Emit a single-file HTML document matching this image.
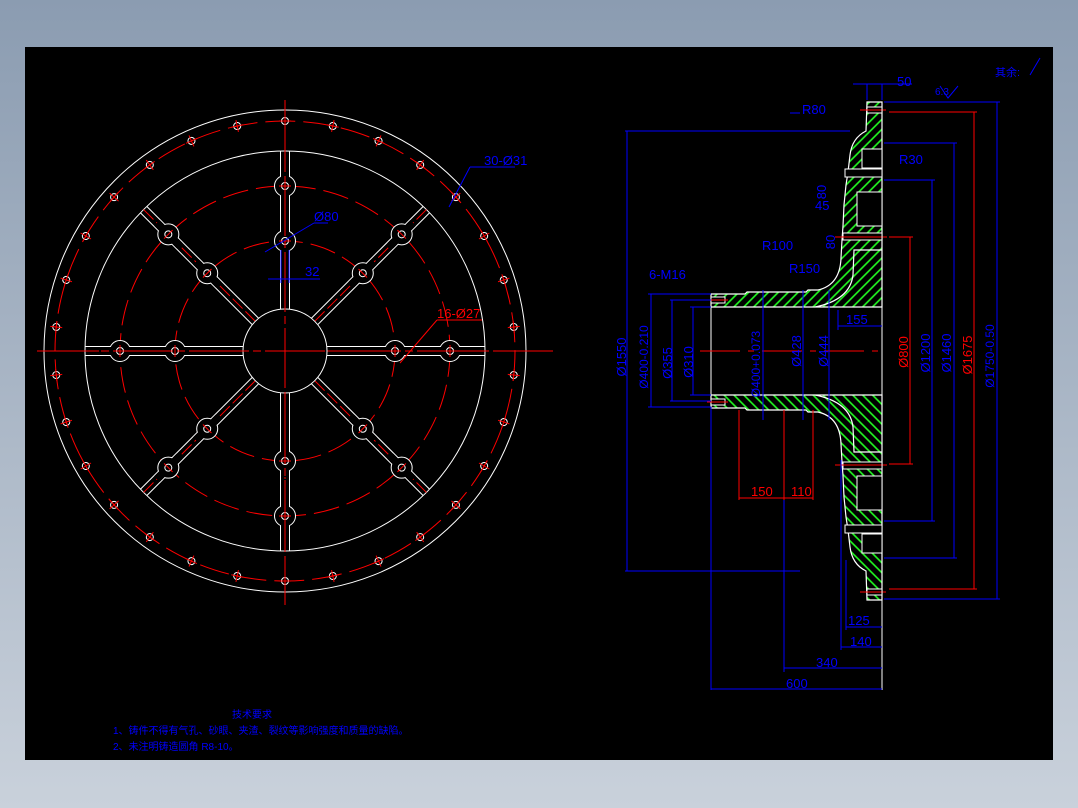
<!DOCTYPE html>
<html><head><meta charset="utf-8">
<style>
html,body{margin:0;padding:0;width:1078px;height:808px;overflow:hidden;background:linear-gradient(#8b9cb1,#c9d1db);}
svg{position:absolute;left:0;top:0}
text{font-family:"Liberation Sans","Noto Sans CJK SC",sans-serif;}
</style></head><body>
<svg width="1078" height="808" viewBox="0 0 1078 808" xmlns="http://www.w3.org/2000/svg">
<defs>
<pattern id="h" width="7" height="7" patternUnits="userSpaceOnUse" patternTransform="rotate(45)">
<line x1="1" y1="0" x2="1" y2="7" stroke="#2f2" stroke-width="1.6"/>
</pattern>
<g id="bh"><circle cx="285" cy="121" r="3.5" fill="none" stroke="#fff" stroke-width="1"/><path d="M279,121h12M285,115v12" stroke="#f00" stroke-width="1"/></g>
<g id="sp">
<path d="M280.5,151V309M289.5,151V309" stroke="#fff" fill="none" stroke-width="1"/>
<line x1="285" y1="151" x2="285" y2="309" stroke="#f00" stroke-dasharray="14,4" stroke-width="1"/>
<circle cx="285" cy="186" r="10.5" fill="#000" stroke="#fff"/>
<circle cx="285" cy="241" r="10.5" fill="#000" stroke="#fff"/>
<rect x="281" y="170" width="8" height="32" fill="#000"/>
<rect x="281" y="225" width="8" height="32" fill="#000"/>
<circle cx="285" cy="186" r="3.5" fill="none" stroke="#fff"/>
<circle cx="285" cy="241" r="3.5" fill="none" stroke="#fff"/>
<path d="M279,186h12M279,241h12" stroke="#f00"/>
</g>
<g id="half">
<path d="M711,294 L745,294 L747,292 L806,292 L808,290 L818,290 Q840,285 841,258 L842,240 L843,226 L844,205 L846,185 L848,172 L850,155 Q852,138 866,131 L867,102 L882,102 L882,307 L815,307 Q850,300 853,275 L854,250 L882,250 L882,307 L711,307 Z" fill="url(#h)" stroke="#fff" stroke-width="1.2"/>
<rect x="862" y="149" width="20" height="19" fill="#000" stroke="#fff"/>
<rect x="857" y="192" width="25" height="34" fill="#000" stroke="#fff"/>
<rect x="867" y="107" width="15" height="6" fill="#000" stroke="#fff"/>
<rect x="845" y="169" width="37" height="8" fill="#000" stroke="#fff"/>
<rect x="843" y="233" width="39" height="7" fill="#000" stroke="#fff"/>
<rect x="711" y="297" width="14" height="6" fill="#000" stroke="#fff"/>
<line x1="707" y1="300" x2="728" y2="300" stroke="#f00"/>
<line x1="860" y1="110" x2="886" y2="110" stroke="#f00"/>
<line x1="835" y1="237" x2="887" y2="237" stroke="#f00"/>
</g>
</defs>
<rect x="25" y="47" width="1028" height="713" fill="#000"/>

<g fill="none" stroke-width="1">
<circle cx="285" cy="351" r="241" stroke="#fff"/>
<circle cx="285" cy="351" r="230" stroke="#f00" stroke-dasharray="30,8"/>
<circle cx="285" cy="351" r="200" stroke="#fff"/>
<circle cx="285" cy="351" r="165" stroke="#f00" stroke-dasharray="26,8"/>
<circle cx="285" cy="351" r="110" stroke="#f00" stroke-dasharray="26,8"/>
</g>
<g>
<use href="#bh"/><use href="#bh" transform="rotate(12 285 351)"/><use href="#bh" transform="rotate(24 285 351)"/><use href="#bh" transform="rotate(36 285 351)"/><use href="#bh" transform="rotate(48 285 351)"/><use href="#bh" transform="rotate(60 285 351)"/><use href="#bh" transform="rotate(72 285 351)"/><use href="#bh" transform="rotate(84 285 351)"/><use href="#bh" transform="rotate(96 285 351)"/><use href="#bh" transform="rotate(108 285 351)"/><use href="#bh" transform="rotate(120 285 351)"/><use href="#bh" transform="rotate(132 285 351)"/><use href="#bh" transform="rotate(144 285 351)"/><use href="#bh" transform="rotate(156 285 351)"/><use href="#bh" transform="rotate(168 285 351)"/><use href="#bh" transform="rotate(180 285 351)"/><use href="#bh" transform="rotate(192 285 351)"/><use href="#bh" transform="rotate(204 285 351)"/><use href="#bh" transform="rotate(216 285 351)"/><use href="#bh" transform="rotate(228 285 351)"/><use href="#bh" transform="rotate(240 285 351)"/><use href="#bh" transform="rotate(252 285 351)"/><use href="#bh" transform="rotate(264 285 351)"/><use href="#bh" transform="rotate(276 285 351)"/><use href="#bh" transform="rotate(288 285 351)"/><use href="#bh" transform="rotate(300 285 351)"/><use href="#bh" transform="rotate(312 285 351)"/><use href="#bh" transform="rotate(324 285 351)"/><use href="#bh" transform="rotate(336 285 351)"/><use href="#bh" transform="rotate(348 285 351)"/>
</g>
<g>
<use href="#sp"/><use href="#sp" transform="rotate(45 285 351)"/><use href="#sp" transform="rotate(90 285 351)"/><use href="#sp" transform="rotate(135 285 351)"/><use href="#sp" transform="rotate(180 285 351)"/><use href="#sp" transform="rotate(225 285 351)"/><use href="#sp" transform="rotate(270 285 351)"/><use href="#sp" transform="rotate(315 285 351)"/>
</g>
<circle cx="285" cy="351" r="42" fill="#000" stroke="#fff"/>
<path d="M37,351H555M285,100V605" stroke="#f00" stroke-width="1" stroke-dasharray="60,4,8,4"/>
<g stroke="#00f" stroke-width="1" fill="none">
<path d="M470,167H515M470,167L449,207"/>
<path d="M314,223H328M314,223L265,252"/>
<path d="M281,250V283M289,250V283M268,279H320"/>
</g>
<path d="M437,320H482M437,320L400,363" stroke="#f00" fill="none"/>
<g fill="#00f" font-size="13">
<text x="484" y="165">30-Ø31</text>
<text x="314" y="221">Ø80</text>
<text x="305" y="276">32</text>
</g>
<text x="437" y="318" fill="#f00" font-size="13">16-Ø27</text>

<line x1="711" y1="294" x2="711" y2="407" stroke="#fff"/>
<use href="#half"/>
<use href="#half" transform="translate(0,702) scale(1,-1)"/>
<line x1="882" y1="102" x2="882" y2="690" stroke="#fff"/>
<line x1="711" y1="407" x2="711" y2="690" stroke="#00f"/>
<path d="M700,351H880" stroke="#f00" stroke-dasharray="40,8,6,8"/>
<g stroke="#00f" stroke-width="1" fill="none">
<path d="M853,84H912M867,84V100M882,84V100"/>
<path d="M625,131H850M627,131V571M625,571H800"/>
<path d="M648,294H711M651,294V407M648,407H711"/>
<path d="M670,300H711M672,300V401M670,401H711"/>
<path d="M690,307H711M693,307V395M690,395H711"/>
<path d="M763,290V420M803,290V420M829,290V420"/>
<path d="M838,326H882M838,310V330"/>
<path d="M884,180H935M932,180V521M884,521H935"/>
<path d="M884,143H957M954,143V558M884,558H957"/>
<path d="M884,102H1000M997,102V599M884,599H1000"/>
<path d="M846,627H882M846,560V630M841,647H882M841,460V650M784,668H882M784,420V672M711,689H882"/>
<path d="M790,113L800,113M940,86L948,98L958,86M1030,75L1040,58"/>
</g>
<g stroke="#f00" fill="none">
<path d="M889,237H913M910,237V464M889,464H913"/>
<path d="M889,112H977M974,112V589M889,589H977"/>
<path d="M739,410V500M784,410V500M813,410V500M739,498H813"/>
</g>
<g fill="#00f" font-size="13">
<text x="897" y="86">50</text>
<text x="802" y="114">R80</text>
<text x="899" y="164">R30</text>
<text x="815" y="210">45</text>
<text x="762" y="250">R100</text>
<text x="789" y="273">R150</text>
<text x="649" y="279">6-M16</text>
<text x="846" y="324">155</text>
<text x="848" y="625">125</text>
<text x="850" y="646">140</text>
<text x="816" y="667">340</text>
<text x="786" y="688">600</text>
<text x="935" y="95" font-size="10">6.3</text>
<text x="995" y="76" font-size="11">其余:</text>
<text transform="translate(826,192) rotate(-90)" text-anchor="middle">80</text>
<text transform="translate(835,242) rotate(-90)" text-anchor="middle">80</text>
<text transform="translate(626,357) rotate(-90)" text-anchor="middle">Ø1550</text>
<text transform="translate(648,357) rotate(-90)" text-anchor="middle" font-size="12">Ø400-0.210</text>
<text transform="translate(672,363) rotate(-90)" text-anchor="middle">Ø355</text>
<text transform="translate(693,362) rotate(-90)" text-anchor="middle">Ø310</text>
<text transform="translate(760,364) rotate(-90)" text-anchor="middle" font-size="12">Ø400+0.073</text>
<text transform="translate(801,351) rotate(-90)" text-anchor="middle">Ø428</text>
<text transform="translate(828,351) rotate(-90)" text-anchor="middle">Ø444</text>
<text transform="translate(930,353) rotate(-90)" text-anchor="middle">Ø1200</text>
<text transform="translate(951,353) rotate(-90)" text-anchor="middle">Ø1460</text>
<text transform="translate(994,356) rotate(-90)" text-anchor="middle" font-size="12">Ø1750-0.50</text>
</g>
<g fill="#f00" font-size="13">
<text transform="translate(908,352) rotate(-90)" text-anchor="middle">Ø800</text>
<text transform="translate(972,355) rotate(-90)" text-anchor="middle">Ø1675</text>
<text x="751" y="496">150</text>
<text x="791" y="496">110</text>
</g>
<g fill="#00f" font-size="10">
<text x="232" y="718">技术要求</text>
<text x="113" y="734">1、铸件不得有气孔、砂眼、夹渣、裂纹等影响强度和质量的缺陷。</text>
<text x="113" y="750">2、未注明铸造圆角 R8-10。</text>
</g>
</svg>
</body></html>
